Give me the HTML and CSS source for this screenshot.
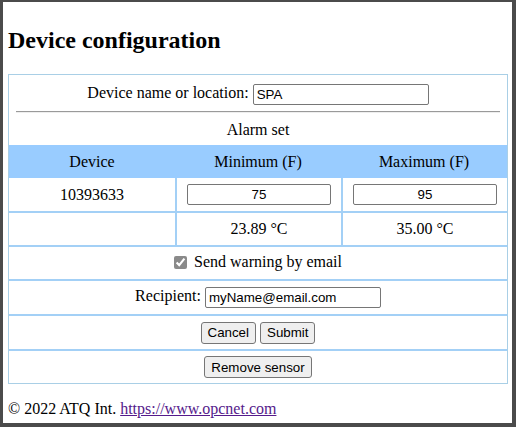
FILE: index.html
```html
<!DOCTYPE html>
<html>
<head>
<meta charset="utf-8">
<title>Device configuration</title>
<link rel="stylesheet" href="styles.css">
</head>
<body>
<div class="window">
  <h2 class="title">Device configuration</h2>
  <table class="config">
    <tr>
      <td colspan="3" class="top-cell">
        <div class="name-line">Device name or location: <input type="text" class="text-input" value="SPA"></div>
        <hr class="divider">
        <div class="alarm">Alarm set</div>
      </td>
    </tr>
    <tr class="head">
      <th>Device</th>
      <th>Minimum (F)</th>
      <th>Maximum (F)</th>
    </tr>
    <tr class="first-row">
      <td>10393633</td>
      <td class="sep"><input type="text" class="num-input" value="75"></td>
      <td class="sep"><input type="text" class="num-input" value="95"></td>
    </tr>
    <tr class="row">
      <td></td>
      <td class="sep">23.89 °C</td>
      <td class="sep">35.00 °C</td>
    </tr>
    <tr class="row">
      <td colspan="3"><label class="check"><input type="checkbox" checked class="box"> Send warning by email</label></td>
    </tr>
    <tr class="row tall">
      <td colspan="3">Recipient: <input type="text" class="text-input" value="myName@email.com"></td>
    </tr>
    <tr class="row tall">
      <td colspan="3"><button class="btn">Cancel</button> <button class="btn">Submit</button></td>
    </tr>
    <tr class="row">
      <td colspan="3"><button class="btn">Remove sensor</button></td>
    </tr>
  </table>
  <p class="footer">© 2022 ATQ Int. <a href="#" class="link">https://www.opcnet.com</a></p>
</div>
</body>
</html>
```

FILE: styles.css
```css
html, body {
  margin: 0;
  padding: 0;
}
body {
  font-family: "Liberation Serif", "Times New Roman", serif;
  font-size: 16px;
  color: #000;
  background: #fff;
}
.window {
  box-sizing: border-box;
  width: 516px;
  height: 427px;
  border-style: solid;
  border-color: #4b4b4b;
  border-width: 2px 4px 4px 3px;
  padding: 0 4px 0 5px;
  overflow: hidden;
}
.title {
  font-size: 24px;
  font-weight: bold;
  margin: 25px 0 20px;
}
.config {
  width: 100%;
  table-layout: fixed;
  border-collapse: separate;
  border-spacing: 0;
  border: 1px solid #a9cfe6;
  text-align: center;
}
.config td, .config th {
  padding: 0 10px;
  text-align: center;
  vertical-align: middle;
}
.top-cell {
  padding: 6px 7px 6px !important;
}
.name-line {
  height: 23px;
  line-height: 23px;
}
.divider {
  margin: 7px 0;
  border: none;
  border-top: 1px solid #9a9a9a;
  border-bottom: 1px solid #eeeeee;
  height: 0;
}
.alarm {
  line-height: 19px;
}
.head th {
  background: #99ccff;
  font-weight: normal;
  height: 33px;
}
.first-row td {
  height: 33px;
}
.row td {
  border-top: 2px solid #a3d0f6;
  height: 32px;
}
.row.tall td {
  height: 33px;
}
.sep {
  border-left: 2px solid #a3d0f6;
}
.text-input, .num-input {
  box-sizing: border-box;
  height: 21px;
  border: 1px solid #767676;
  border-radius: 2px;
  padding: 1px 3px;
  font-family: "Liberation Sans", Arial, sans-serif;
  font-size: 13.33px;
  color: #000;
  background: #fff;
  vertical-align: middle;
}
.text-input {
  width: 176px;
}
.num-input {
  width: 100%;
  text-align: center;
}
.check {
  display: inline-flex;
  align-items: center;
}
.box {
  width: 13px;
  height: 13px;
  margin: 0 7px 0 0;
  accent-color: #8a8a8a;
}
.btn {
  font-family: "Liberation Sans", Arial, sans-serif;
  font-size: 13.33px;
  color: #000;
  background: #efefef;
  border: 1px solid #767676;
  border-radius: 3px;
  padding: 2px 6px;
  height: 22px;
  vertical-align: middle;
}
.footer {
  margin: 16px 0 0;
}
.link {
  color: #551a8b;
}
```
